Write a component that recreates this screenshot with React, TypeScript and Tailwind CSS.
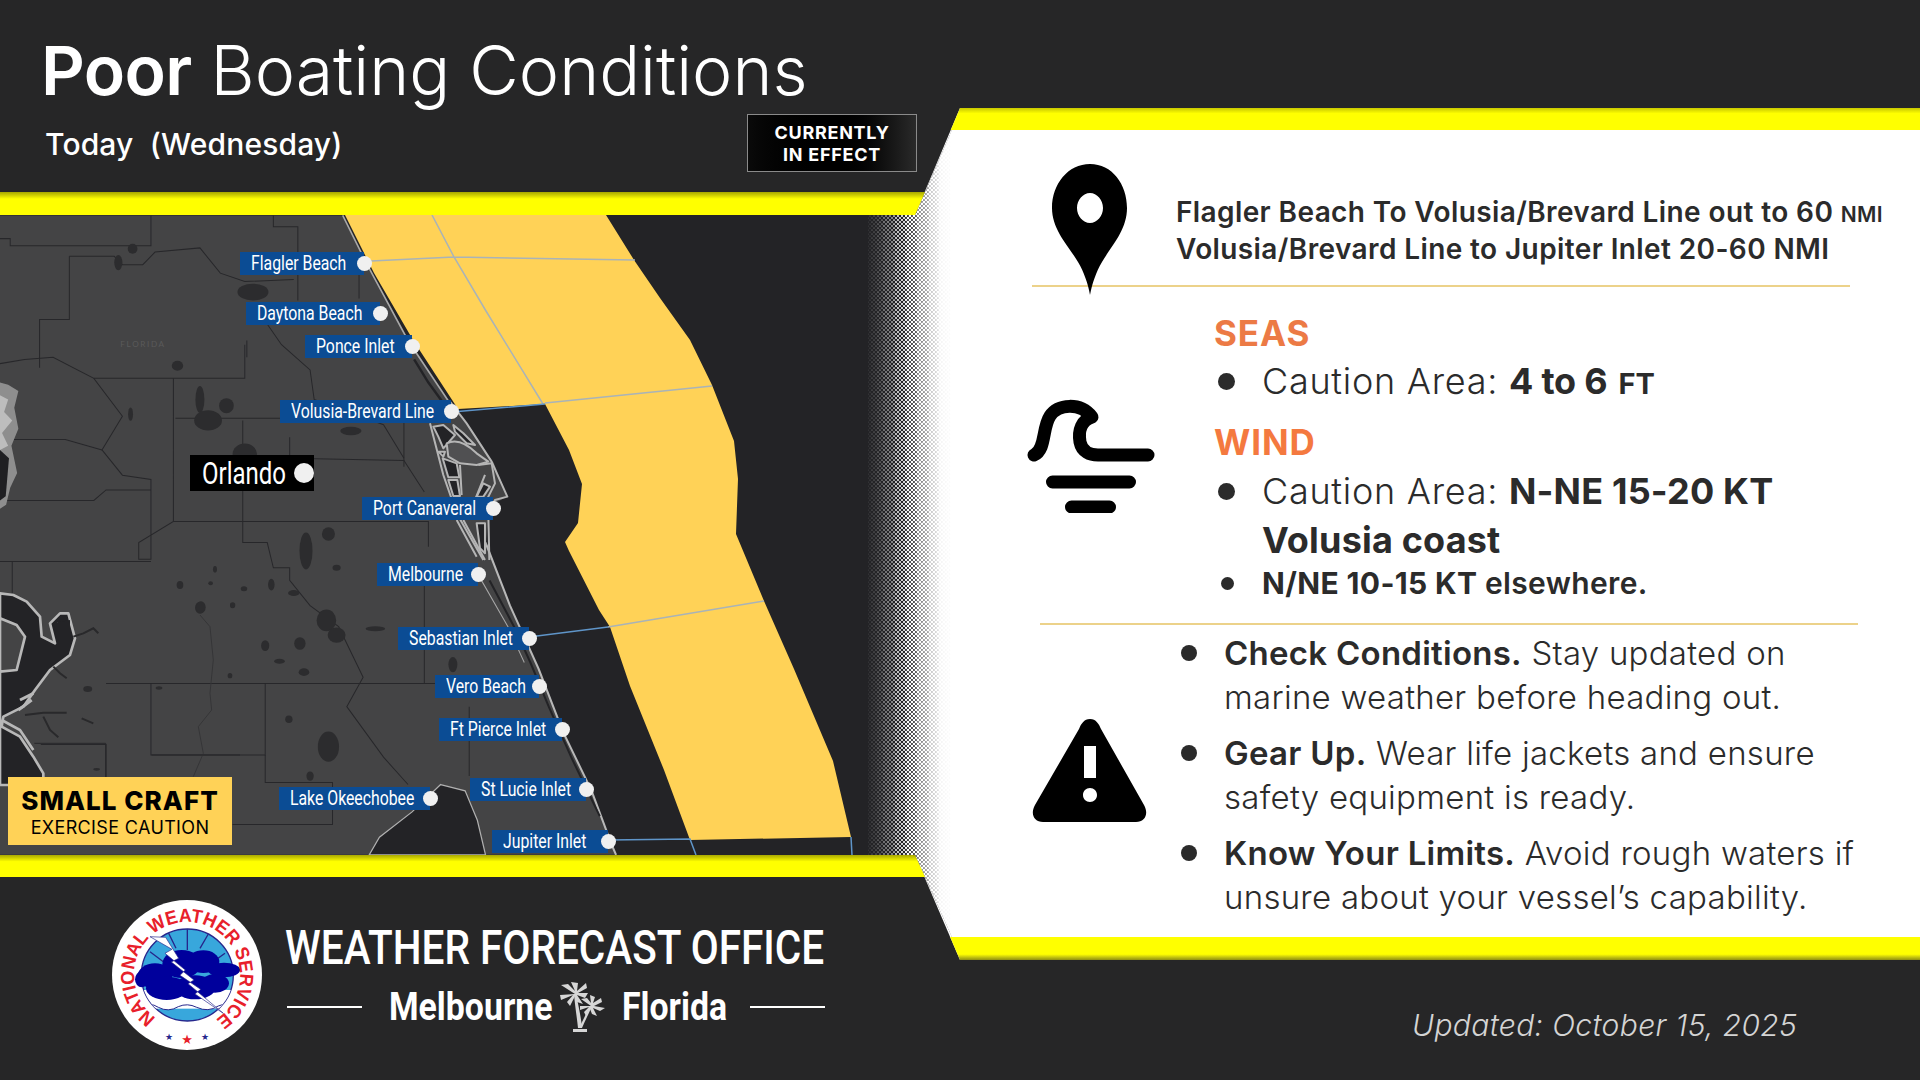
const labels = [
  { text: 'Flagler Beach', box: 'left-[240px] top-[37px] w-[124px]' },
  { text: 'Daytona Beach', box: 'left-[246px] top-[87px] w-[134px]' },
  { text: 'Ponce Inlet', box: 'left-[305px] top-[120px] w-[107px]' },
  { text: 'Volusia-Brevard Line', box: 'left-[280px] top-[185px] w-[171px]' },
  { text: 'Port Canaveral', box: 'left-[362px] top-[282px] w-[131px]' },
  { text: 'Melbourne', box: 'left-[377px] top-[348px] w-[101px]' },
  { text: 'Sebastian Inlet', box: 'left-[398px] top-[412px] w-[131px]' },
  { text: 'Vero Beach', box: 'left-[435px] top-[460px] w-[104px]' },
  { text: 'Ft Pierce Inlet', box: 'left-[439px] top-[503px] w-[123px]' },
  { text: 'St Lucie Inlet', box: 'left-[470px] top-[563px] w-[116px]' },
  { text: 'Lake Okeechobee', box: 'left-[279px] top-[572px] w-[151px]' },
  { text: 'Jupiter Inlet', box: 'left-[492px] top-[615px] w-[116px]' },
];

const lakes = [
  [325, 92, 12, 12], [620, 195, 38, 20], [435, 370, 14, 12], [490, 450, 11, 32], [555, 465, 18, 18],
  [510, 500, 34, 24], [600, 580, 30, 25], [860, 525, 26, 10], [805, 770, 16, 16], [750, 810, 16, 44],
  [825, 850, 10, 7], [490, 945, 12, 14], [570, 940, 6, 6], [598, 900, 8, 6], [665, 890, 8, 14],
  [720, 910, 14, 7], [800, 975, 24, 26], [825, 1010, 22, 18], [735, 1030, 14, 15], [650, 1035, 10, 13],
  [920, 995, 24, 6], [685, 1072, 13, 6], [745, 1098, 13, 9], [805, 1275, 26, 36], [708, 1210, 9, 9],
  [215, 1138, 11, 7], [1110, 1080, 11, 18], [760, 1345, 9, 11], [290, 125, 10, 18], [320, 485, 6, 16],
];

const countyLines = [
  'M0,68 H25 V85 H370 V13',
  'M170,110 V260 H97 V375',
  'M170,110 H280 L300,130 L350,130 L380,100 L490,90 L540,150 L600,170 L720,165',
  'M0,365 L60,355 L130,350 L230,400 L300,490 L250,570 L300,630 L370,640 V830 H340 V790 L425,740 V400',
  'M230,400 H600 V320',
  'M670,13 V40 H730 V215',
  'M880,120 V210',
  'M0,545 H160 L250,570',
  'M0,690 H230 L260,665 H370',
  'M0,835 H370',
  'M30,835 V910',
  'M595,500 V790 H655 L670,850 H710 V880 L760,940 L830,990 L890,1110 L850,1180 L940,1300 L1000,1365',
  'M425,740 H1050 V800',
  'M1040,850 V1125',
  'M260,1125 H1100',
  'M650,1125 V1295 H370 V1125',
  'M100,1270 H260 V1350',
  'M650,1295 V1360 H815 V1460 H570',
  'M1150,1180 V1345',
  'M990,500 V610',
  'M710,540 V590 L990,595 L1040,670',
  'M430,495 H710',
  'M640,250 L690,320 L760,380 L770,450 L940,510 L990,590',
  'M605,310 V350',
];

const halftoneDots: { x: number; y: number; r: number }[] = [];
for (let col = 0; col < 43; col++) {
  for (let row = 0; row < 203; row++) {
    const x = col * 2;
    halftoneDots.push({ x, y: row * 4 + (col % 2 ? 2 : 0), r: 0.3 + (1.85 * x) / 84 });
  }
}

function Halftone() {
  return (
    <svg
      className="absolute left-[868px] top-[130px] z-[5] w-[84px] h-[807px] [clip-path:polygon(84px_0,84px_100%,47px_725px,0_725px,0_85px,47px_85px)]"
      viewBox="0 0 84 807"
    >
      <rect width="84" height="807" fill="#232326" />
      {halftoneDots.map((d, i) => (
        <circle key={i} cx={d.x} cy={d.y} r={d.r} fill="#ffffff" />
      ))}
    </svg>
  );
}

function MapDrawing() {
  return (
    <svg className="absolute inset-0 w-full h-full" viewBox="0 0 915 640">
      <rect width="915" height="640" fill="#232326" />
      {/* land and details, drawn in the 2.45 / 2.376 scale of the crop */}
      <g transform="translate(0,-5) scale(0.408,0.4209)">
        <path
          d="M840,13 L900,130 L1000,310 L1110,470 L1160,540 L1210,600 L1243,680 L1200,705 L1190,790 L1250,940 L1320,1090 L1380,1240 L1450,1380 L1500,1510 L1510,1532 L0,1532 L0,13 Z"
          fill="#444445"
        />
        {countyLines.map((d) => (
          <path key={d} d={d} fill="none" stroke="#27272a" strokeWidth="2.4" />
        ))}
        {lakes.map(([cx, cy, rx, ry]) => (
          <ellipse key={`${cx}-${cy}`} cx={cx} cy={cy} rx={rx} ry={ry} fill="#2c2c2e" />
        ))}
        {/* Atlantic coast */}
        <path d="M840,13 L900,130 L1000,310 L1110,470" fill="none" stroke="#a8a8a8" strokeWidth="4" />
        <path
          d="M1190,790 L1250,940 L1320,1090 L1380,1240 L1450,1380 L1500,1510 L1510,1532"
          fill="none"
          stroke="#b8b8b8"
          strokeWidth="5"
        />
        <path d="M1015,355 L1050,410 L1095,470" fill="none" stroke="#232326" strokeWidth="6" />
        <path
          d="M1200,880 L1260,990 L1300,1075 L1345,1180 L1400,1300 L1470,1440"
          fill="none"
          stroke="#232326"
          strokeWidth="5"
        />
        <path d="M1180,880 L1245,990 L1285,1075" fill="none" stroke="#a8a8a8" strokeWidth="2.5" />
        {/* west side, top edge */}
        <path d="M0,410 L20,415 L45,430 L35,470 L45,520 L28,560 L42,625 L25,660 L15,700 L0,710 Z" fill="#8e8e8e" />
        <path d="M0,440 L20,450 L10,480 L30,500 L5,530 L20,560 L0,570 Z" fill="#bdbdbd" />
        <path d="M0,570 L22,590 L14,680 L0,690 Z" fill="#1f1f22" />
        {/* Lake Okeechobee */}
        <path
          d="M1080,1365 L1140,1380 L1170,1450 L1190,1532 L905,1532 L930,1490 L1010,1430 Z"
          fill="#232326"
          stroke="#b0b0b0"
          strokeWidth="3"
        />
        <text x="295" y="325" fontSize="20" letterSpacing="4" fill="#5a5a5a" fontFamily="Lato, sans-serif">
          FLORIDA
        </text>
      </g>
      {/* Tampa Bay and the Gulf */}
      <g transform="translate(0,345) scale(0.3333)">
        <path
          d="M0,100 L40,105 L80,125 L120,170 L125,230 L165,250 L150,190 L180,160 L205,160 L225,235 L210,285 L150,330 L105,390 L70,440 L10,470 L5,500 L60,530 L100,590 L130,640 L130,675 L0,675 Z"
          fill="#232326"
          stroke="#b8b8b8"
          strokeWidth="8"
          strokeLinejoin="round"
        />
        <path
          d="M0,175 L50,195 L75,230 L50,330 L0,335 Z"
          fill="#444445"
          stroke="#b8b8b8"
          strokeWidth="8"
          strokeLinejoin="round"
        />
        <path d="M5,480 L60,510 L100,570" fill="none" stroke="#b8b8b8" strokeWidth="8" />
        <path d="M60,420 L100,400 M55,450 L95,420 M170,190 L200,230" fill="none" stroke="#b8b8b8" strokeWidth="9" />
        <path d="M160,190 L210,180 L210,240 L170,240 Z" fill="#232326" />
        <path
          d="M220,230 L250,220 L280,205 L295,220 M160,320 L180,340 L200,355 M75,465 L130,458 L200,458 M130,470 L150,510 L175,532 M245,475 L280,490"
          fill="none"
          stroke="#29292b"
          strokeWidth="6"
        />
        <path d="M600,165 L630,200 L640,300 L630,400 L635,450 L595,500 L610,580 L580,650" fill="none" stroke="#353537" strokeWidth="3" />
        <path d="M103,550 H317 V660 M455,585 H720" fill="none" stroke="#27272a" strokeWidth="3" />
        <g fill="#2c2c2e">
          <ellipse cx="540" cy="75" rx="10" ry="12" />
          <ellipse cx="632" cy="70" rx="7" ry="6" />
          <ellipse cx="603" cy="142" rx="14" ry="18" />
          <ellipse cx="698" cy="135" rx="8" ry="8" />
          <ellipse cx="645" cy="28" rx="6" ry="10" />
          <ellipse cx="690" cy="347" rx="7" ry="8" />
          <ellipse cx="290" cy="628" rx="10" ry="4" />
          <ellipse cx="477" cy="384" rx="10" ry="5" />
        </g>
      </g>
      {/* Cape Canaveral */}
      <g transform="translate(420,185) scale(0.3333)" stroke="#b5b5b5" strokeWidth="6" strokeLinejoin="round">
        <path d="M90,5 L140,70 L215,185 L235,230 L262,290 L225,300 L205,340 L195,480" fill="#444445" stroke="none" />
        <path d="M90,5 L140,70 L215,185 L235,230 L262,290 L225,300 L205,340 L208,480" fill="none" />
        <path d="M30,70 L70,225 L110,340 L190,480" fill="none" />
        <path d="M40,80 L70,75 L105,105 L70,145 L55,110 Z" fill="#232326" />
        <path d="M55,155 L75,155 L70,170 Z" fill="#232326" />
        <path d="M68,175 L110,190 L118,232 L85,232 Z" fill="#232326" />
        <path d="M85,240 L112,240 L120,288 L100,288 Z" fill="#232326" />
        <path d="M100,75 L130,100 L165,135 L140,130 L105,95 Z" fill="#232326" />
        <path d="M190,250 L210,260 L190,290 L170,290 Z" fill="#232326" />
        <path d="M170,370 L195,370 L195,460 L180,445 Z" fill="#232326" />
        <path d="M80,130 Q120,110 170,160 L205,185 L170,195 L120,190 L85,170 Z" fill="#505052" />
        <path d="M120,195 L125,285 M175,195 L215,190 L225,250 L200,300 M165,300 L195,225 M110,360 L170,470 M130,360 L195,480" fill="none" />
      </g>
      {/* caution area */}
      <g transform="translate(0,-215)">
        <path
          d="M345,215 L606,215 L634,260 L660,298 L690,340 L712,385 L734,441 L738,479 L736,534 L764,601 L794,669 L833,761 L851,837 L690,840 L664,770 L630,686 L610,627 L599,610 L569,551 L565,542 L578,523 L582,484 L569,450 L545,404 L458,409 L413,340 L374,273 Z"
          fill="#ffd257"
        />
        <path
          d="M371,261 L454,257 L635,260 M432,215 L454,257 L486,311 L543,404 M545,403 L712,386 M608,627 L764,601"
          fill="none"
          stroke="#a9b3b8"
          strokeWidth="1.5"
        />
        <path
          d="M452,412 L545,404 M529,637 L608,627 M608,840 L690,839 L696,855 M851,837 L852,855"
          fill="none"
          stroke="#5f95c9"
          strokeWidth="1.5"
        />
      </g>
    </svg>
  );
}

function MapLabel({ text, box }: { text: string; box: string }) {
  return (
    <div className={`absolute h-[23px] bg-[#0b4c94] ${box}`}>
      <span className="absolute left-[11px] top-0 leading-[23px] text-[20px] text-white font-['Roboto',sans-serif] whitespace-nowrap origin-left scale-x-[0.79]">
        {text}
      </span>
      <span className="absolute -right-[8px] top-[4px] w-[15px] h-[15px] rounded-full bg-[#f0f0f0]" />
    </div>
  );
}

function NwsLogo() {
  return (
    <svg className="w-[150px] h-[150px] shrink-0" viewBox="0 0 150 150">
      <defs>
        <clipPath id="inner-disc">
          <circle cx="262" cy="255" r="138" />
        </clipPath>
        <path id="ring" d="M75,128 A53,53 0 1 1 75.1,128" />
      </defs>
      <circle cx="75" cy="75" r="75" fill="#ffffff" />
      <g transform="translate(-12 -10) scale(0.3333)">
        <circle cx="262" cy="255" r="138" fill="#38a7dc" stroke="#26268c" strokeWidth="4" />
        <g clipPath="url(#inner-disc)">
          <path d="M262,118 V180 M205,128 L228,175 M325,132 L300,175 M150,185 L190,215 M375,190 L340,215" stroke="#26268c" strokeWidth="4" />
          <rect x="120" y="300" width="290" height="56" fill="#ffffff" />
          <path d="M120,352 Q150,335 175,352 Q205,368 235,350 Q262,338 290,352 Q325,368 355,348 Q385,335 410,352" fill="#ffffff" stroke="#26268c" strokeWidth="3" />
        </g>
        <g fill="#00009c">
          <ellipse cx="165" cy="258" rx="52" ry="38" />
          <ellipse cx="245" cy="222" rx="58" ry="42" />
          <ellipse cx="310" cy="215" rx="48" ry="34" />
          <ellipse cx="372" cy="240" rx="48" ry="22" />
          <ellipse cx="200" cy="295" rx="62" ry="35" />
          <ellipse cx="285" cy="292" rx="62" ry="36" />
          <ellipse cx="345" cy="280" rx="42" ry="28" />
          <ellipse cx="125" cy="268" rx="20" ry="24" />
        </g>
        <path
          d="M150,140 L197,142 L236,205 L214,216 L282,270 L264,281 L370,370 L285,312 L302,298 L240,256 L256,240 L195,190 L216,178 Z"
          fill="#ffffff"
          stroke="#26268c"
          strokeWidth="2"
        />
      </g>
      <text fontFamily="'Liberation Sans', sans-serif" fontWeight="700" fontSize="19" fill="#e8202a">
        <textPath href="#ring" startOffset="33" textLength="269" lengthAdjust="spacingAndGlyphs">
          NATIONAL WEATHER SERVICE
        </textPath>
      </text>
      <text x="57" y="140" fontSize="9" fill="#26268c" fontFamily="'DejaVu Sans', sans-serif" textAnchor="middle">★</text>
      <text x="75" y="144" fontSize="13" fill="#e8202a" fontFamily="'DejaVu Sans', sans-serif" textAnchor="middle">★</text>
      <text x="93" y="140" fontSize="9" fill="#26268c" fontFamily="'DejaVu Sans', sans-serif" textAnchor="middle">★</text>
    </svg>
  );
}

function PalmIcon() {
  return (
    <svg className="w-[46px] h-[50px] shrink-0" viewBox="0 0 46 50" fill="#d6d6d6">
      <path d="M15,12 C16,24 18,36 19,46 H23 C22,34 19,22 17,12 Z" />
      <path d="M33,24 C30,31 26,39 23,46 L20,46 C24,38 28,30 31,24 Z" />
      <path d="M14,47 H28 V50 H14 Z" />
      <path d="M16,12 L2,3 L9,2 L16,9 L12,0 L19,1 L18,9 L27,1 L28,6 L19,11 L29,11 L26,16 L18,13 L24,22 L18,20 L16,14 L11,24 L8,20 L14,13 L2,18 L1,13 Z" />
      <path d="M32,24 L22,17 L28,16 L32,21 L31,13 L36,15 L34,21 L42,16 L43,20 L35,24 L46,26 L41,29 L34,26 L38,34 L33,32 L31,27 L27,34 L25,30 L30,25 L21,28 L21,24 Z" />
    </svg>
  );
}

function Divider({ inset }: { inset: string }) {
  return <div className={`h-[2px] w-[818px] bg-[#ecd28a] shrink-0 ${inset}`} />;
}

function Bullet({ size }: { size: string }) {
  return <span className={`rounded-full bg-[#2b2b2b] shrink-0 ${size}`} />;
}

const tips = [
  { head: 'Check Conditions.', first: ' Stay updated on', second: 'marine weather before heading out.' },
  { head: 'Gear Up.', first: ' Wear life jackets and ensure', second: 'safety equipment is ready.' },
  { head: 'Know Your Limits.', first: ' Avoid rough waters if', second: 'unsure about your vessel’s capability.' },
];

export default function App() {
  return (
    <div className="relative flex w-[1920px] h-[1080px] overflow-hidden bg-[#262627] font-[Inter,sans-serif]">
      {/* ── LEFT COLUMN ── */}
      <div className="w-[915px] shrink-0 flex flex-col">
        <header className="relative h-[192px] shrink-0 pl-[41px] pt-[29px] text-white">
          <h1 className="text-[68px] leading-[82px] font-light whitespace-nowrap">
            <span className="font-semibold tracking-[-0.01em]">Poor</span> Boating Conditions
          </h1>
          <p className="ml-[4px] mt-[14px] text-[30px] leading-[38px] font-medium tracking-[0.005em] whitespace-pre">Today  (Wednesday)</p>
          <div className="absolute left-[747px] top-[114px] w-[170px] h-[58px] pt-[1px] border border-[#8a8a8a] bg-linear-to-r from-[#0a0a0a] via-black to-[#2a2a2a] flex items-center justify-center text-center text-[18px] leading-[22px] font-bold tracking-[0.04em]">
            CURRENTLY
            <br />
            IN EFFECT
          </div>
        </header>
        <div className="relative z-10 w-[925px] h-[23px] shrink-0 bg-linear-to-b from-[#a8a800] from-0% to-[#ffff00] to-30% [clip-path:polygon(0_0,100%_0,calc(100%-10px)_100%,0_100%)]" />

        {/* Map */}
        <div className="relative h-[640px] shrink-0">
          <MapDrawing />
          {labels.map((l) => (
            <MapLabel key={l.text} text={l.text} box={l.box} />
          ))}
          <div className="absolute left-[190px] top-[240px] w-[124px] h-[36px] bg-black">
            <span className="absolute left-[12px] top-0 leading-[36px] text-[32px] text-white font-['Roboto',sans-serif] whitespace-nowrap origin-left scale-x-[0.75]">
              Orlando
            </span>
            <span className="absolute left-[104px] top-[8px] w-[20px] h-[20px] rounded-full bg-[#f0f0f0]" />
          </div>
          <div className="absolute left-[8px] top-[562px] w-[224px] h-[68px] bg-[#ffd257] flex flex-col items-center text-black">
            <span className="text-[26px] leading-[30px] mt-[9px] font-extrabold tracking-[0.04em] whitespace-nowrap">SMALL CRAFT</span>
            <span className="text-[18px] leading-[24px] font-normal tracking-[0.02em] whitespace-nowrap">EXERCISE CAUTION</span>
          </div>
        </div>
        <div className="relative z-10 w-[925px] h-[22px] shrink-0 bg-linear-to-b from-[#a8a800] from-0% to-[#ffff00] to-30% [clip-path:polygon(0_0,calc(100%-10px)_0,100%_100%,0_100%)]" />

        {/* Footer */}
        <footer className="flex items-start pl-[112px] pt-[23px] text-white">
          <NwsLogo />
          <div className="ml-[23px] w-[540px] pt-[19px]">
            <div className="h-[58px] font-['Roboto',sans-serif] text-[49px] leading-[58px] font-medium whitespace-nowrap origin-left scale-x-[0.828]">
              WEATHER FORECAST OFFICE
            </div>
            <div className="flex items-center h-[52px] mt-[4px]">
              <span className="ml-[2px] w-[75px] h-[2px] bg-white shrink-0" />
              <span className="ml-[27px] w-[170px] font-['Roboto',sans-serif] text-[38px] leading-[52px] font-bold whitespace-nowrap origin-left scale-x-[0.89]">
                Melbourne
              </span>
              <PalmIcon />
              <span className="ml-[17px] w-[128px] font-['Roboto',sans-serif] text-[38px] leading-[52px] font-bold whitespace-nowrap origin-left scale-x-[0.89]">
                Florida
              </span>
              <span className="w-[75px] h-[2px] bg-white shrink-0" />
            </div>
          </div>
        </footer>
      </div>

      {/* ── RIGHT COLUMN ── */}
      <div className="w-[1005px] shrink-0 flex flex-col">
        <section className="mt-[108px] h-[852px] shrink-0 bg-white flex flex-col text-[#2b2b2b] [clip-path:polygon(45px_0,100%_0,100%_100%,45px_100%,0_747px,0_107px)]">
          <div className="h-[22px] shrink-0 bg-linear-to-b from-[#c8c800] from-0% to-[#ffff00] to-25%" />

          {/* Where */}
          <div className="h-[155px] shrink-0 flex pl-[137px]">
            <svg className="w-[75px] h-[131px] shrink-0 mt-[34px] relative z-[1]" viewBox="1052 164 75 131">
              <path
                fillRule="evenodd"
                d="M1090,164 C1112,164 1127,184 1127,208 C1127,230 1112,245 1102,262 C1096,272 1092,284 1090,295 C1088,284 1084,272 1078,262 C1068,245 1052,230 1052,208 C1052,184 1068,164 1090,164 Z M1090,193 C1083,193 1077,200 1077,208 C1077,216 1083,223 1090,223 C1097,223 1103,216 1103,208 C1103,200 1097,193 1090,193 Z"
              />
            </svg>
            <div className="ml-[49px] pt-[65px] text-[28px] leading-[35px] font-semibold tracking-[0.014em] whitespace-nowrap">
              <p>
                Flagler Beach To Volusia/Brevard Line out to 60 <span className="text-[21px]">NMI</span>
              </p>
              <p>Volusia/Brevard Line to Jupiter Inlet 20-60 NMI</p>
            </div>
          </div>
          <Divider inset="ml-[117px]" />

          {/* Seas and wind */}
          <div className="h-[336px] shrink-0 flex pl-[110px]">
            <svg className="w-[130px] h-[116px] shrink-0 mt-[110px]" viewBox="1025 397 130 116">
              <path
                d="M1034,455 C1046,450 1042,428 1050,416 C1058,404 1080,402 1092,417 C1082,420 1078,430 1080,442 C1082,452 1090,455 1098,455 H1148"
                fill="none"
                stroke="#000"
                strokeWidth="13"
                strokeLinecap="round"
                strokeLinejoin="round"
              />
              <path d="M1052.5,482 H1129.5 M1071.5,507 H1109.5" stroke="#000" strokeWidth="13" strokeLinecap="round" />
            </svg>
            <div className="ml-[59px] pt-[24px]">
              <h2 className="text-[35px] leading-[44px] font-bold tracking-[0.025em] text-[#ec7a45]">SEAS</h2>
              <div className="flex items-center h-[52px]">
                <Bullet size="w-[17px] h-[17px] ml-[4px]" />
                <p className="ml-[27px] text-[36px] font-light tracking-[0.02em] whitespace-nowrap">
                  Caution Area: <span className="font-bold tracking-[-0.005em]">4 to 6</span> <span className="font-bold text-[29px] tracking-normal">FT</span>
                </p>
              </div>
              <h2 className="mt-[13px] text-[35px] leading-[44px] font-bold tracking-[0.025em] text-[#f4793f]">WIND</h2>
              <div className="flex items-center h-[52px] mt-[1px]">
                <Bullet size="w-[17px] h-[17px] ml-[4px]" />
                <p className="ml-[27px] text-[36px] font-light tracking-[0.02em] whitespace-nowrap">
                  Caution Area: <span className="font-bold tracking-[0.005em]">N-NE 15-20 KT</span>
                </p>
              </div>
              <p className="ml-[48px] text-[36px] leading-[46px] font-bold tracking-[0.005em]">Volusia coast</p>
              <div className="flex items-center h-[40px]">
                <Bullet size="w-[13px] h-[13px] ml-[7px]" />
                <p className="ml-[28px] text-[30px] font-bold tracking-[0.012em] whitespace-nowrap">
                  N/NE 10-15 KT <span className="font-semibold">elsewhere.</span>
                </p>
              </div>
            </div>
          </div>
          <Divider inset="ml-[125px]" />

          {/* Advice */}
          <div className="flex-1 flex pl-[117px]">
            <svg className="w-[115px] h-[103px] shrink-0 mt-[94px]" viewBox="1032 719 115 103">
              <path
                fillRule="evenodd"
                d="M1090,719 C1096,719 1099,724 1101,729 L1144,805 C1149,814 1145,822 1136,822 H1043 C1034,822 1030,814 1035,805 L1079,729 C1081,724 1084,719 1090,719 Z M1084,746 V778 H1096 V746 Z M1090,788 C1086,788 1083,791 1083,795 C1083,799 1086,802 1090,802 C1094,802 1097,799 1097,795 C1097,791 1094,788 1090,788 Z"
              />
            </svg>
            <ul className="ml-[34px] pt-[6px] flex flex-col gap-[12px] text-[33px] leading-[44px] font-light tracking-[0.008em] whitespace-nowrap">
              {tips.map((t) => (
                <li key={t.head} className="flex">
                  <Bullet size="w-[16px] h-[16px] mt-[14px]" />
                  <div className="ml-[27px]">
                    <p>
                      <span className="font-semibold">{t.head}</span>
                      {t.first}
                    </p>
                    <p>{t.second}</p>
                  </div>
                </li>
              ))}
            </ul>
          </div>

          <div className="h-[23px] shrink-0 bg-linear-to-b from-[#ffff00] from-75% to-[#8f8f10] to-100%" />
        </section>
        <p className="pl-[497px] pt-[47px] text-[30px] leading-[36px] italic font-light tracking-[0.012em] text-[#d4d4d4] whitespace-nowrap">
          Updated: October 15, 2025
        </p>
      </div>

      <Halftone />
    </div>
  );
}
